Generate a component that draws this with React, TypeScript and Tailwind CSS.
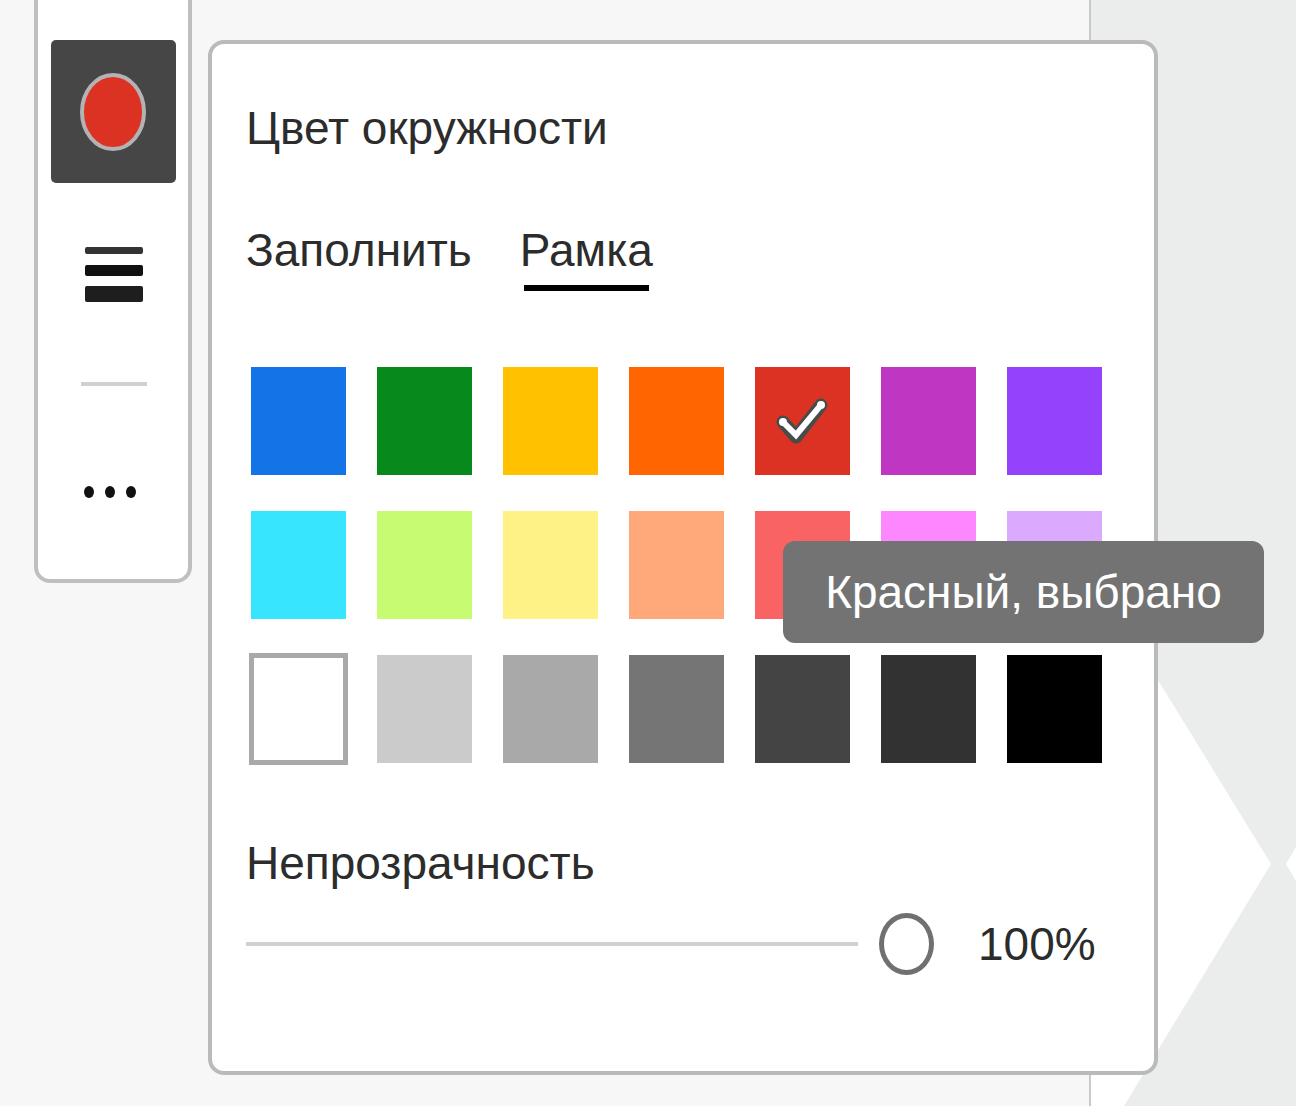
import React, { useState } from 'react';

interface Swatch {
    name: string;
    color: string;
}

const SWATCHES: Swatch[] = [
    { name: 'Синий', color: 'bg-[#1473e6]' },
    { name: 'Зеленый', color: 'bg-[#078a1b]' },
    { name: 'Желтый', color: 'bg-[#ffc100]' },
    { name: 'Оранжевый', color: 'bg-[#ff6500]' },
    { name: 'Красный', color: 'bg-[#dc3223]' },
    { name: 'Пурпурный', color: 'bg-[#bf36c3]' },
    { name: 'Фиолетовый', color: 'bg-[#9542fd]' },
    { name: 'Голубой', color: 'bg-[#38e5ff]' },
    { name: 'Салатовый', color: 'bg-[#c6fb72]' },
    { name: 'Светло-желтый', color: 'bg-[#fef286]' },
    { name: 'Персиковый', color: 'bg-[#ffa97b]' },
    { name: 'Светло-красный', color: 'bg-[#f96364]' },
    { name: 'Розовый', color: 'bg-[#fc87fe]' },
    { name: 'Сиреневый', color: 'bg-[#dba9fe]' },
    { name: 'Белый', color: 'bg-white outline-[5px] -outline-offset-3 outline-[#a9a9a9]' },
    { name: 'Светло-серый', color: 'bg-[#cbcbcb]' },
    { name: 'Серый', color: 'bg-[#a9a9a9]' },
    { name: 'Средне-серый', color: 'bg-[#757575]' },
    { name: 'Темно-серый', color: 'bg-[#444444]' },
    { name: 'Графитовый', color: 'bg-[#323232]' },
    { name: 'Черный', color: 'bg-black' },
];

const TABS = ['Заполнить', 'Рамка'];

const Backdrop: React.FC = () => (
    <div className="col-start-1 row-start-1 flex overflow-hidden" aria-hidden="true">
        <div className="flex-1 bg-[#f7f7f7]" />
        <div className="w-[207px] border-l-2 border-[#c9c9c9] bg-[#eaedec]">
            <svg viewBox="0 0 205 1106" className="w-full fill-white">
                <polygon points="180,864 0,571 0,1106 33,1106" />
                <polygon points="195,864 205,847 205,881" />
            </svg>
        </div>
    </div>
);

const Toolbar: React.FC = () => (
    <div className="flex h-[583px] w-[158px] shrink-0 flex-col items-center rounded-b-2xl border-4 border-t-0 border-[#bfbfbf] bg-white pt-10">
        <button type="button" aria-label="Цвет" className="flex h-[143px] w-[125px] items-center justify-center rounded-[5px] bg-[#464646]">
            <svg viewBox="0 0 68 80" className="h-20 w-[68px]">
                <ellipse cx="34" cy="40" rx="31" ry="37" fill="#dc3223" stroke="#b3b3b3" strokeWidth="4" />
            </svg>
        </button>
        <button type="button" aria-label="Толщина линии" className="mt-[60px]">
            <svg viewBox="0 0 60 64" className="h-16 w-[60px]">
                <rect x="2" y="4" width="58" height="7" rx="2" fill="#333333" />
                <rect x="2" y="22" width="58" height="11" rx="2" fill="#111111" />
                <rect x="2" y="43" width="58" height="16" rx="2" fill="#1e1e1e" />
            </svg>
        </button>
        <hr className="mt-[75px] ml-0.5 w-[66px] border-t-4 border-[#d0d0d0]" />
        <button type="button" aria-label="Дополнительно" className="mt-[86px] mr-1.5">
            <svg viewBox="0 0 56 40" className="h-10 w-14" fill="#111111">
                <ellipse cx="7" cy="20" rx="5" ry="6" />
                <ellipse cx="28" cy="20" rx="5" ry="6" />
                <ellipse cx="49" cy="20" rx="5" ry="6" />
            </svg>
        </button>
    </div>
);

const CheckMark: React.FC = () => (
    <svg viewBox="0 0 56 52" className="h-[52px] w-14" fill="none" strokeLinecap="round" strokeLinejoin="miter">
        <path d="M8 27 L21 42 L46 10" stroke="#464c4a" strokeWidth="13" strokeLinejoin="round" />
        <path d="M8 27 L21 40 L46 10" stroke="#ffffff" strokeWidth="6" />
        <circle cx="8" cy="27" r="4" fill="#ffffff" />
        <circle cx="46" cy="10" r="4" fill="#ffffff" />
    </svg>
);

export default function App() {
    const [tab, setTab] = useState('Рамка');
    const [selected, setSelected] = useState('Красный');
    const [opacity, setOpacity] = useState(100);

    return (
        <main className="grid min-h-screen font-['Liberation_Sans',Arial,sans-serif] text-[46px] text-[#2c2c2c]">
            <Backdrop />

            <div className="z-10 col-start-1 row-start-1 flex items-start pr-[138px] pl-[34px]">
                <Toolbar />

                <section className="mt-10 ml-4 min-w-0 flex-1 rounded-2xl border-4 border-[#bababa] bg-white pt-[54px] pr-[52px] pb-24 pl-[34px]">
                    <h1 className="leading-[60px]">Цвет окружности</h1>

                    <div role="tablist" className="mt-[62px] flex gap-12">
                        {TABS.map((name) => (
                            <button
                                key={name}
                                type="button"
                                role="tab"
                                aria-selected={tab === name}
                                onClick={() => setTab(name)}
                                className="flex flex-col gap-[5px] leading-[60px]"
                            >
                                {name}
                                <span className={`mx-1 h-1.5 self-stretch ${tab === name ? 'bg-black' : 'bg-transparent'}`} />
                            </button>
                        ))}
                    </div>

                    {/* Palette */}
                    <div className="mt-[76px] grid grid-cols-7 gap-x-[31px] gap-y-9 pl-[5px]">
                        {SWATCHES.map(({ name, color }) => (
                            <button
                                key={name}
                                type="button"
                                aria-label={name}
                                aria-pressed={selected === name}
                                onClick={() => setSelected(name)}
                                className={`relative flex h-[108px] items-center justify-center ${color}`}
                            >
                                {selected === name && (
                                    <>
                                        <CheckMark />
                                        <span role="tooltip" className="absolute top-[174px] left-7 z-10 min-w-[481px] rounded-xl bg-[#737373] px-9 py-[21px] leading-[60px] whitespace-nowrap text-white">
                                            {name}, выбрано
                                        </span>
                                    </>
                                )}
                            </button>
                        ))}
                    </div>

                    {/* Opacity */}
                    <label htmlFor="opacity" className="mt-[70px] block leading-[60px]">Непрозрачность</label>
                    <div className="mt-5 flex items-center gap-11">
                        <input
                            id="opacity"
                            type="range"
                            min={0}
                            max={100}
                            value={opacity}
                            onChange={(e) => setOpacity(Number(e.target.value))}
                            className="h-[62px] min-w-0 flex-1 appearance-none bg-transparent [&::-webkit-slider-runnable-track]:h-1 [&::-webkit-slider-runnable-track]:bg-[#d0d0d0] [&::-webkit-slider-thumb]:-mt-[29px] [&::-webkit-slider-thumb]:h-[62px] [&::-webkit-slider-thumb]:w-[55px] [&::-webkit-slider-thumb]:appearance-none [&::-webkit-slider-thumb]:rounded-[50%] [&::-webkit-slider-thumb]:border-[5px] [&::-webkit-slider-thumb]:border-[#707070] [&::-webkit-slider-thumb]:bg-white [&::-webkit-slider-thumb]:shadow-[0_0_0_21px_white]"
                        />
                        <output htmlFor="opacity" className="w-[124px] leading-[60px]">{opacity}%</output>
                    </div>
                </section>
            </div>
        </main>
    );
}
